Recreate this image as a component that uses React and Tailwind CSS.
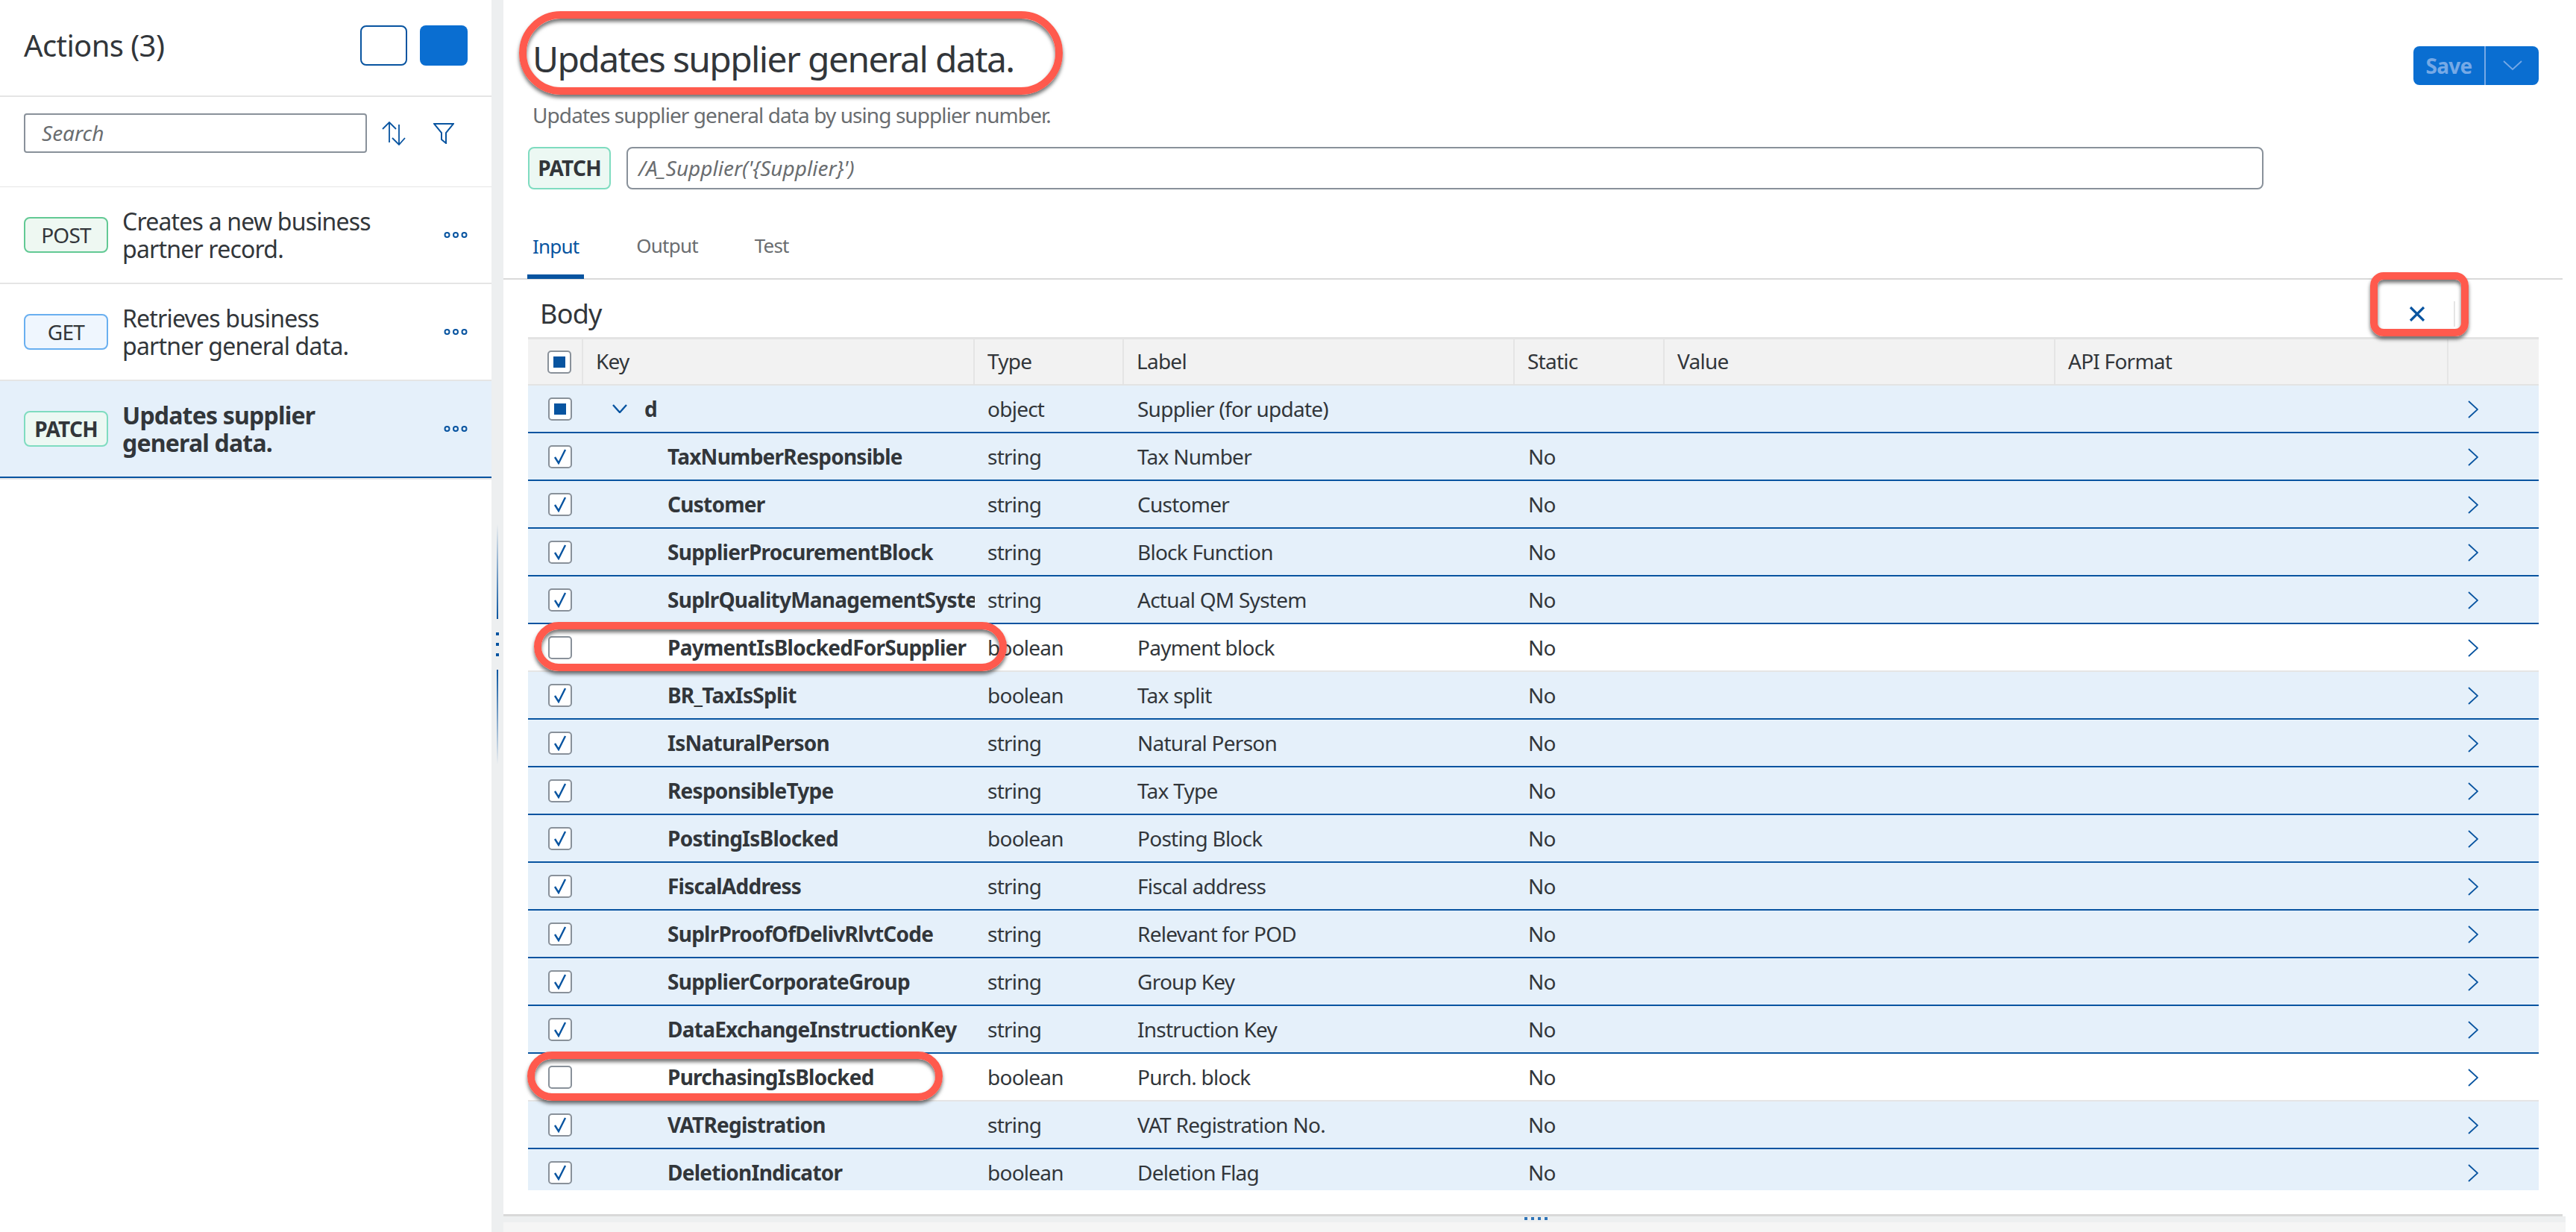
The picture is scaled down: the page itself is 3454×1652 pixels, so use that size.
import React from 'react';

const rows = [
  ['TaxNumberResponsible', 'string', 'Tax Number', true],
  ['Customer', 'string', 'Customer', true],
  ['SupplierProcurementBlock', 'string', 'Block Function', true],
  ['SuplrQualityManagementSystem', 'string', 'Actual QM System', true],
  ['PaymentIsBlockedForSupplier', 'boolean', 'Payment block', false],
  ['BR_TaxIsSplit', 'boolean', 'Tax split', true],
  ['IsNaturalPerson', 'string', 'Natural Person', true],
  ['ResponsibleType', 'string', 'Tax Type', true],
  ['PostingIsBlocked', 'boolean', 'Posting Block', true],
  ['FiscalAddress', 'string', 'Fiscal address', true],
  ['SuplrProofOfDelivRlvtCode', 'string', 'Relevant for POD', true],
  ['SupplierCorporateGroup', 'string', 'Group Key', true],
  ['DataExchangeInstructionKey', 'string', 'Instruction Key', true],
  ['PurchasingIsBlocked', 'boolean', 'Purch. block', false],
  ['VATRegistration', 'string', 'VAT Registration No.', true],
  ['DeletionIndicator', 'boolean', 'Deletion Flag', true],
];

const actions = [
  ['POST', 'Creates a new business partner record.', 'border-[#62c994] bg-[#eef8f2]', false],
  ['GET', 'Retrieves business partner general data.', 'border-[#69aff0] bg-[#eff6fe]', false],
  ['PATCH', 'Updates supplier general data.', 'border-[#7fdcc0] bg-[#ecf8f3]', true],
];

const gridCols = 'grid grid-cols-[74px_525px_200px_524px_201px_524px_527px_121px]';

const Checkbox = ({ state }) => (
  <div className="w-8 h-[31px] rounded-[5px] border-2 border-[#89919a] bg-white flex items-center justify-center">
    {state === 'checked' && (
      <svg width="20" height="22" viewBox="0 0 20 22" fill="none" stroke="#0854a0" strokeWidth="2.4">
        <path d="M3 12 L8 20 L17 2" />
      </svg>
    )}
    {state === 'partial' && <div className="w-4 h-[15px] bg-[#0854a0]" />}
  </div>
);

const More = () => (
  <svg width="32" height="10" viewBox="0 0 32 10" fill="none" stroke="#0854a0" strokeWidth="2">
    <circle cx="4.5" cy="5" r="3" />
    <circle cx="16" cy="5" r="3" />
    <circle cx="27.5" cy="5" r="3" />
  </svg>
);

const ChevronRight = () => (
  <svg className="mt-[1px]" width="14" height="24" viewBox="0 0 14 24" fill="none" stroke="#0854a0" strokeWidth="1.8">
    <path d="M1 1 L13 12 L1 23" />
  </svg>
);

const Annotation = ({ className }) => (
  <div className={`absolute z-10 pointer-events-none border-[10px] border-[#ff5a4d] shadow-[0_4px_5px_rgba(0,0,0,0.55),inset_0_4px_5px_rgba(0,0,0,0.55)] ${className}`} />
);

const Row = ({ name, type, label, selected }) => (
  <div className={`${gridCols} h-16 shrink-0 border-b-2 text-[28px] leading-[62px] ${selected ? 'bg-[#e5f0fa] border-[#0854a0]' : 'bg-white border-[#e5e5e5]'}`}>
    <div className="flex items-center justify-center pl-[12px]"><Checkbox state={selected ? 'checked' : 'none'} /></div>
    <div className="pl-[113px] font-bold overflow-hidden whitespace-nowrap">{name}</div>
    <div className="pl-[17px]">{type}</div>
    <div className="pl-[18px]">{label}</div>
    <div className="pl-[18px]">No</div>
    <div />
    <div />
    <div className="flex items-center pl-[26px]"><ChevronRight /></div>
  </div>
);

export default function App() {
  return (
    <div className="flex w-[3454px] h-[1652px] overflow-hidden bg-white text-[#32363a] font-['Noto_Sans',sans-serif] tracking-[-0.75px]">
      {/* list of actions */}
      <aside className="w-[659px] shrink-0 flex flex-col">
        <div className="h-[130px] shrink-0 border-b-2 border-[#e5e5e5] flex items-center justify-between pl-8 pr-8 pb-[6px]">
          <h1 className="text-[40px] font-normal tracking-[-0.6px]">Actions (3)</h1>
          <div className="flex gap-[17px]">
            <div className="w-[63px] h-[54px] rounded-[8px] border-2 border-[#0854a0] bg-white" />
            <div className="w-[64px] h-[54px] rounded-[8px] bg-[#0a6ed1]" />
          </div>
        </div>
        <div className="h-[121px] shrink-0 border-b border-[#e5e5e5] flex items-start pl-8 pt-[22px]">
          <div className="w-[460px] h-[53px] border-2 border-[#89919a] rounded-[4px] flex items-center pl-[22px] pb-[2px] text-[28px] italic text-[#6a6d70] tracking-normal">Search</div>
          <svg className="ml-5 mt-[11px]" width="32" height="32" viewBox="0 0 32 32" fill="none" stroke="#0854a0" strokeWidth="2">
            <path d="M10 28 V1 M1 10 L10 1 L19 10" strokeWidth="1.8" />
            <path d="M23 4 V31 M14 22 L23 31 L31 22" strokeWidth="1.8" />
          </svg>
          <svg className="ml-[37px] mt-[13px]" width="28" height="28" viewBox="0 0 28 28" fill="none" stroke="#0854a0" strokeWidth="2">
            <path d="M1 1 H27 L17 13 V27 L11 22 V13 Z" />
          </svg>
        </div>
        {actions.map(([method, text, badge, active]) => (
          <div key={method} className={`h-[130px] shrink-0 flex items-center pl-8 pr-8 border-b-2 ${active ? 'bg-[#e5f0fa] border-[#0854a0]' : 'border-[#e5e5e5]'}`}>
            <div className={`w-[113px] h-[48px] shrink-0 rounded-[8px] border-2 flex items-center justify-center text-[28px] ${badge} ${active ? 'font-bold' : ''}`}>{method}</div>
            <div className={`ml-[19px] w-[350px] text-[32px] leading-[37px] tracking-[-0.8px] ${active ? 'font-bold' : ''}`}>{text}</div>
            <div className="ml-auto"><More /></div>
          </div>
        ))}
        <div className="h-[2px] bg-[#e5e5e5]" />
      </aside>

      {/* splitter */}
      <div className="w-4 shrink-0 bg-[#edeff0] flex flex-col items-center pt-[703px]">
        <div className="w-[2px] h-[127px] bg-linear-to-b from-transparent to-[#0854a0]" />
        <div className="flex flex-col gap-[10px] mt-[18px]">
          <div className="w-1 h-1 bg-[#0854a0]" />
          <div className="w-1 h-1 bg-[#0854a0]" />
          <div className="w-1 h-1 bg-[#0854a0]" />
        </div>
        <div className="w-[2px] h-[127px] mt-[18px] bg-linear-to-b from-[#0854a0] to-transparent" />
      </div>

      {/* detail */}
      <main className="w-[2765px] shrink-0 flex flex-col relative">
        <Annotation className="left-[21px] top-[15px] w-[729px] h-[112px] rounded-[56px]" />
        <Annotation className="left-[41px] top-[834px] w-[634px] h-[66px] rounded-[33px]" />
        <Annotation className="left-[32px] top-[1410px] w-[557px] h-[66px] rounded-[33px]" />
        <Annotation className="left-[2503px] top-[365px] w-[132px] h-[86px] rounded-[18px]" />

        <div className="h-[197px] shrink-0 flex items-start justify-between pl-[39px] pr-[36px] pt-[49px]">
          <div>
            <h2 className="text-[48px] leading-[60px] font-normal tracking-[-1.63px]">Updates supplier general data.</h2>
            <p className="mt-[26px] text-[28px] leading-[38px] text-[#6a6d70] tracking-[-0.92px]">Updates supplier general data by using supplier number.</p>
          </div>
          <div className="mt-[13px] w-[168px] h-[52px] rounded-[8px] bg-[#0a6ed1] flex items-center text-[#76a9e6]">
            <div className="w-[97px] h-full flex items-center justify-center text-[28px] font-bold border-r-2 border-[#76a9e6]">Save</div>
            <div className="flex-1 flex justify-center">
              <svg width="26" height="14" viewBox="0 0 26 14" fill="none" stroke="#76a9e6" strokeWidth="1.8"><path d="M1 1 L13 12 L25 1" /></svg>
            </div>
          </div>
        </div>

        <div className="h-[57px] shrink-0 flex pl-[33px] gap-[21px]">
          <div className="w-[111px] rounded-[8px] border-2 border-[#7fdcc0] bg-[#ecf8f3] flex items-center justify-center text-[28px] font-bold pb-[2px]">PATCH</div>
          <div className="w-[2195px] rounded-[8px] border-2 border-[#89919a] flex items-center pl-[14px] pb-[2px] text-[28px] italic text-[#6a6d70] tracking-normal">/A_Supplier('{'{'}Supplier{'}'}')</div>
        </div>

        <div className="h-[121px] shrink-0 w-[2761px] border-b-2 border-[#d9d9d9] flex items-end pl-8 text-[26px] leading-[38px] tracking-[-0.8px]">
          <div className="px-[7px] pb-[19px] -mb-px border-b-[6px] border-[#0854a0] text-[#0854a0]">Input</div>
          <div className="ml-[63px] px-[7px] pb-[25px] text-[#6a6d70]">Output</div>
          <div className="ml-[62px] px-[7px] pb-[25px] text-[#6a6d70]">Test</div>
        </div>

        <div className="h-[77px] shrink-0 pt-[14px] pl-[49px] pr-[148px] flex items-center justify-between">
          <h3 className="text-[36px] font-normal">Body</h3>
          <div className="flex items-center gap-[38px]">
            <svg width="22" height="20" viewBox="0 0 22 20" fill="none" stroke="#0854a0" strokeWidth="3.2"><path d="M2 1 L20 19 M20 1 L2 19" /></svg>
            <div className="w-[2px] h-[34px] bg-[#e5e5e5]" />
          </div>
        </div>

        <div className="ml-[33px] w-[2696px] h-[1144px] shrink-0 overflow-hidden flex flex-col">
          <div className={`${gridCols} h-[65px] shrink-0 bg-[#f2f2f2] border-t-[3px] border-b-2 border-[#e3e3e3] text-[28px] leading-[58px]`}>
            <div className="flex items-center justify-center pl-[12px] border-r-2 border-[#e5e5e5]"><Checkbox state="partial" /></div>
            {['Key', 'Type', 'Label', 'Static', 'Value', 'API Format', ''].map((h) => (
              <div key={h} className={`pl-[17px] ${h ? 'border-r-2 border-[#e5e5e5]' : ''}`}>{h}</div>
            ))}
          </div>
          <div className={`${gridCols} h-16 shrink-0 border-b-2 border-[#0854a0] bg-[#e5f0fa] text-[28px] leading-[62px]`}>
            <div className="flex items-center justify-center pl-[12px]"><Checkbox state="partial" /></div>
            <div className="flex items-center pl-[39px] gap-[23px] font-bold">
              <svg width="20" height="12" viewBox="0 0 20 12" fill="none" stroke="#0854a0" strokeWidth="2.4"><path d="M1 1 L10 11 L19 1" /></svg>
              d
            </div>
            <div className="pl-[17px]">object</div>
            <div className="pl-[18px]">Supplier (for update)</div>
            <div />
            <div />
            <div />
            <div className="flex items-center pl-[26px]"><ChevronRight /></div>
          </div>
          {rows.map(([name, type, label, selected]) => (
            <Row key={name} name={name} type={type} label={label} selected={selected} />
          ))}
        </div>

        <div className="mt-[32px] h-[3px] w-[2761px] shrink-0 bg-[#d9d9d9]" />
        <div className="h-[8px] w-[2765px] shrink-0 bg-[#edeff0] flex pl-[1369px] pt-[1px] gap-[5px]">
          <div className="w-1 h-1 bg-[#2f74b8]" />
          <div className="w-1 h-1 bg-[#2f74b8]" />
          <div className="w-1 h-1 bg-[#2f74b8]" />
          <div className="w-1 h-1 bg-[#2f74b8]" />
        </div>
        <div className="flex-1 w-[2765px] bg-[#f5f5f5]" />
      </main>
    </div>
  );
}
